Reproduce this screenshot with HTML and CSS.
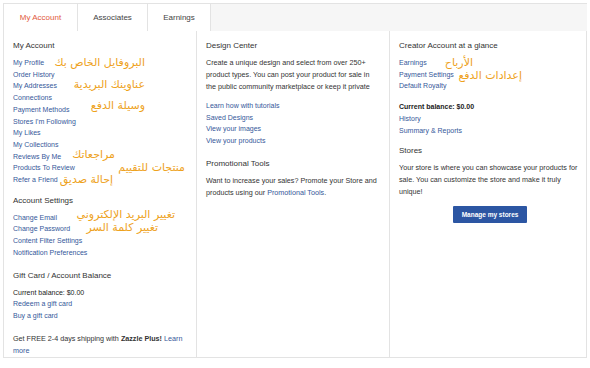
FILE: index.html
```html
<!DOCTYPE html>
<html lang="en">
<head>
    <meta charset="UTF-8">
    <title>My Account</title>
    <link rel="stylesheet" href="styles.css">
</head>
<body>
    <div class="account-page">
        <div class="tabs">
            <div class="tab active">My Account</div>
            <div class="tab">Associates</div>
            <div class="tab">Earnings</div>
        </div>

        <div class="panel">
            <div class="column">
                <div class="section-title">My Account</div>
                <ul class="links">
                    <li><a href="#">My Profile</a></li>
                    <li><a href="#">Order History</a></li>
                    <li><a href="#">My Addresses</a></li>
                    <li><a href="#">Connections</a></li>
                    <li><a href="#">Payment Methods</a></li>
                    <li><a href="#">Stores I'm Following</a></li>
                    <li><a href="#">My Likes</a></li>
                    <li><a href="#">My Collections</a></li>
                    <li><a href="#">Reviews By Me</a></li>
                    <li><a href="#">Products To Review</a></li>
                    <li><a href="#">Refer a Friend</a></li>
                </ul>

                <div class="section-title">Account Settings</div>
                <ul class="links wide-gap">
                    <li><a href="#">Change Email</a></li>
                    <li><a href="#">Change Password</a></li>
                    <li><a href="#">Content Filter Settings</a></li>
                    <li><a href="#">Notification Preferences</a></li>
                </ul>

                <div class="section-title">Gift Card / Account Balance</div>
                <ul class="links wide-gap">
                    <li class="plain">Current balance: $0.00</li>
                    <li><a href="#">Redeem a gift card</a></li>
                    <li><a href="#">Buy a gift card</a></li>
                </ul>

                <p class="text">Get FREE 2-4 days shipping with <b>Zazzle Plus!</b> <a href="#">Learn more</a></p>
            </div>

            <div class="column">
                <div class="section-title">Design Center</div>
                <p class="text">Create a unique design and select from over 250+ product types. You can post your product for sale in the public community marketplace or keep it private</p>
                <ul class="links wide-gap">
                    <li><a href="#">Learn how with tutorials</a></li>
                    <li><a href="#">Saved Designs</a></li>
                    <li><a href="#">View your images</a></li>
                    <li><a href="#">View your products</a></li>
                </ul>

                <div class="section-title">Promotional Tools</div>
                <p class="text promo">Want to increase your sales? Promote your Store and products using our <a href="#">Promotional Tools</a>.</p>
            </div>

            <div class="column narrow">
                <div class="section-title">Creator Account at a glance</div>
                <ul class="links">
                    <li><a href="#">Earnings</a></li>
                    <li><a href="#">Payment Settings</a></li>
                    <li><a href="#">Default Royalty</a></li>
                </ul>
                <ul class="links">
                    <li class="plain"><b>Current balance: $0.00</b></li>
                    <li><a href="#">History</a></li>
                    <li><a href="#">Summary &amp; Reports</a></li>
                </ul>

                <div class="section-title">Stores</div>
                <p class="text">Your store is where you can showcase your products for sale. You can customize the store and make it truly unique!</p>
                <div class="button-row">
                    <button class="store-button">Manage my stores</button>
                </div>
            </div>
        </div>

        <!-- notas em árabe por cima da captura -->
        <span class="note" style="right: 445px; top: 56px;">البروفايل الخاص بك</span>
        <span class="note" style="right: 445px; top: 78px;">عناوينك البريدية</span>
        <span class="note" style="right: 445px; top: 99px;">وسيلة الدفع</span>
        <span class="note" style="right: 475px; top: 148px;">مراجعاتك</span>
        <span class="note" style="right: 405px; top: 161px;">منتجات للتقييم</span>
        <span class="note" style="right: 477px; top: 173px;">إحالة صديق</span>
        <span class="note" style="right: 415px; top: 208px;">تغيير البريد الإلكتروني</span>
        <span class="note" style="right: 432px; top: 221px;">تغيير كلمة السر</span>
        <span class="note" style="right: 117px; top: 56px;">الأرباح</span>
        <span class="note" style="right: 68px; top: 69px;">إعدادات الدفع</span>
    </div>
</body>
</html>
```

FILE: styles.css
```css
:root {
    --border-color: #e3e3e3;
    --link-color: #35589a;
    --text-color: #333333;
    --accent-color: #e2593b;
    --note-color: #eea21c;
}

body {
    margin: 0;
    padding: 0;
    background-color: #ffffff;
    font-family: 'Liberation Sans', Arial, sans-serif;
    color: var(--text-color);
}

.account-page {
    position: relative;
    width: 584px;
    padding: 3px 3px 0 3px;
}

.tabs {
    display: flex;
    height: 27px;
    background-color: #f6f6f6;
    border-top: 1px solid var(--border-color);
    border-left: 1px solid var(--border-color);
}

.tab {
    display: flex;
    align-items: center;
    justify-content: center;
    background-color: #ffffff;
    border-right: 1px solid var(--border-color);
    font-size: 8px;
    color: #444;
}

.tab:nth-child(1) {
    width: 73px;
}

.tab:nth-child(2) {
    width: 69px;
}

.tab:nth-child(3) {
    width: 62px;
}

.tab.active {
    color: var(--accent-color);
}

.panel {
    display: grid;
    grid-template-columns: 193px 193px 1fr;
    height: 326px;
    border: 1px solid var(--border-color);
    border-top: none;
}

.column {
    padding: 9px 9px 0 9px;
    border-right: 1px solid var(--border-color);
}

.column.narrow {
    padding-right: 0;
}

.column:last-child {
    border-right: none;
}

.section-title {
    font-size: 8px;
    line-height: 12px;
    margin-bottom: 5px;
    color: #333;
}

.links {
    list-style: none;
    margin: 0 0 9px 0;
    padding: 0;
}

.links.wide-gap {
    margin-bottom: 11px;
}

.links li {
    font-size: 7px;
    line-height: 11.7px;
}

.links a,
.text a {
    color: var(--link-color);
    text-decoration: none;
}

.links .plain {
    color: #222;
}

.text {
    margin: 0 0 7px 0;
    font-size: 7.2px;
    line-height: 12px;
}

.section-title + .text {
    margin-top: 1px;
}

.text.promo {
    margin-top: 4px;
}

.button-row {
    display: flex;
    justify-content: center;
    margin-top: 8px;
    padding-right: 5px;
}

.store-button {
    background-color: #2c56a3;
    color: #ffffff;
    border: none;
    border-radius: 1px;
    font-family: 'Liberation Sans', Arial, sans-serif;
    font-size: 6.5px;
    font-weight: bold;
    padding: 5px 9px;
    cursor: pointer;
}

.note {
    position: absolute;
    font-family: 'DejaVu Sans', sans-serif;
    font-size: 11px;
    line-height: 14px;
    color: var(--note-color);
    direction: rtl;
    white-space: nowrap;
}
```
